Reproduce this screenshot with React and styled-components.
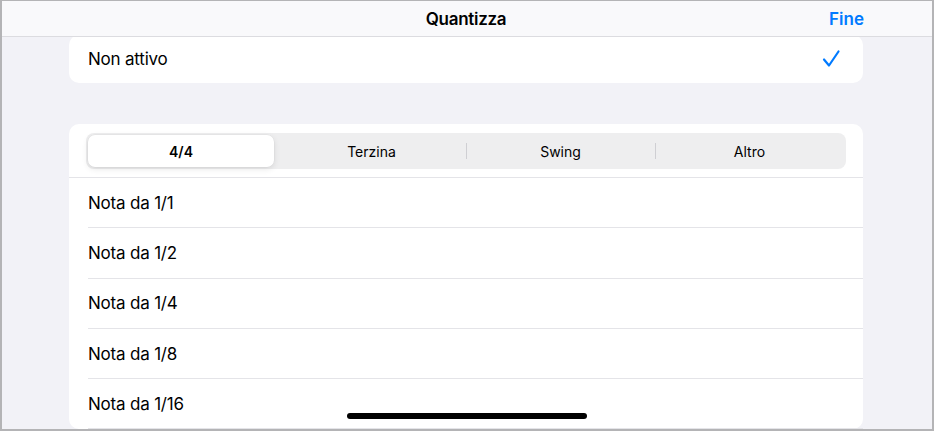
import React, { useState } from "react";
import styled, { createGlobalStyle } from "styled-components";

const GlobalStyle = createGlobalStyle`
  html, body {
    margin: 0;
    padding: 0;
    background: #f2f2f7;
  }
  * {
    box-sizing: border-box;
  }
`;

const Frame = styled.div`
  width: 934px;
  height: 431px;
  border: 2px solid #b4b4b6;
  border-top-width: 1px;
  background: #f2f2f7;
  font-family: Inter, "Noto Sans", sans-serif;
  color: #000;
  display: flex;
  flex-direction: column;
  overflow: hidden;
  position: relative;
`;

const Header = styled.div`
  height: 36px;
  flex: none;
  background: #f9f9fb;
  border-bottom: 1px solid #dcdce0;
  display: grid;
  grid-template-columns: 1fr auto 1fr;
  align-items: center;
  padding: 0 68px 0 0;
  position: relative;
  z-index: 1;
`;

const Title = styled.div`
  grid-column: 2;
  font-size: 17px;
  font-weight: 600;
  letter-spacing: -0.3px;
  margin-left: 66px;
`;

const Done = styled.div`
  grid-column: 3;
  justify-self: end;
  font-size: 17px;
  font-weight: 600;
  color: #007aff;
`;

const Scroll = styled.div`
  flex: 1;
  overflow: hidden;
  padding: 0 69px 0 67px;
  display: flex;
  flex-direction: column;
  gap: 41px;
`;

const Card = styled.div`
  background: #fff;
  border-radius: 10px;
  margin-top: ${(p) => p.$offset || 0}px;
`;

const Row = styled.div`
  height: ${(p) => p.$h || 50}px;
  display: flex;
  align-items: center;
  justify-content: space-between;
  padding: 0 22px 0 19px;
  font-size: 17px;
  letter-spacing: -0.2px;
`;

const Segments = styled.div`
  margin: 9px 17px 0 17px;
  height: 36px;
  background: #eeeeef;
  border-radius: 8px;
  padding: 2px;
  display: grid;
  grid-template-columns: repeat(4, 1fr);
`;

const Segment = styled.div`
  position: relative;
  display: flex;
  align-items: center;
  justify-content: center;
  font-size: 14px;
  font-weight: ${(p) => (p.$active ? 600 : 400)};
  border-radius: 7px;
  background: ${(p) => (p.$active ? "#fff" : "transparent")};
  box-shadow: ${(p) =>
    p.$active ? "0 2px 6px rgba(0,0,0,0.1), 0 0 0 0.5px rgba(0,0,0,0.04)" : "none"};
  margin-right: ${(p) => (p.$active ? 3 : 0)}px;
  &::before {
    content: "";
    display: ${(p) => (p.$divider ? "block" : "none")};
    position: absolute;
    left: 0;
    top: 8px;
    bottom: 8px;
    width: 1px;
    background: #cfcfd3;
  }
`;

const Rule = styled.div`
  height: 1px;
  background: #e4e4e8;
  margin: 8px 0 0 0;
`;

const List = styled.div`
  display: flex;
  flex-direction: column;
`;

const Item = styled.div`
  height: 50.3px;
  flex: none;
  display: flex;
  align-items: center;
  margin-left: 19px;
  font-size: 17px;
  letter-spacing: -0.2px;
  border-bottom: 1px solid #e4e4e8;
`;

const HomeBar = styled.div`
  position: absolute;
  left: 345px;
  bottom: 10px;
  width: 240px;
  height: 6px;
  border-radius: 3px;
  background: #000;
`;

function Check() {
  return (
    <svg width="20" height="20" viewBox="0 0 20 20">
      <path
        d="M3 10.5 L8 16.5 L17.5 2.5"
        fill="none"
        stroke="#007aff"
        strokeWidth="2.2"
        strokeLinecap="round"
        strokeLinejoin="round"
      />
    </svg>
  );
}

const tabs = ["4/4", "Terzina", "Swing", "Altro"];
const notes = ["1/1", "1/2", "1/4", "1/8", "1/16"];

export default function App() {
  const [active, setActive] = useState(0);
  return (
    <>
      <GlobalStyle />
      <Frame>
        <Header>
          <Title>Quantizza</Title>
          <Done>Fine</Done>
        </Header>
        <Scroll>
          <Card $offset={-2}>
            <Row $h={48}>
              <span>Non attivo</span>
              <Check />
            </Row>
          </Card>
          <Card>
            <Segments>
              {tabs.map((t, i) => (
                <Segment
                  key={t}
                  $active={i === active}
                  $divider={i > 1 && i !== active && i - 1 !== active}
                  onClick={() => setActive(i)}
                >
                  {t}
                </Segment>
              ))}
            </Segments>
            <Rule />
            <List>
              {notes.map((n) => (
                <Item key={n}>Nota da {n}</Item>
              ))}
            </List>
          </Card>
        </Scroll>
        <HomeBar />
      </Frame>
    </>
  );
}
